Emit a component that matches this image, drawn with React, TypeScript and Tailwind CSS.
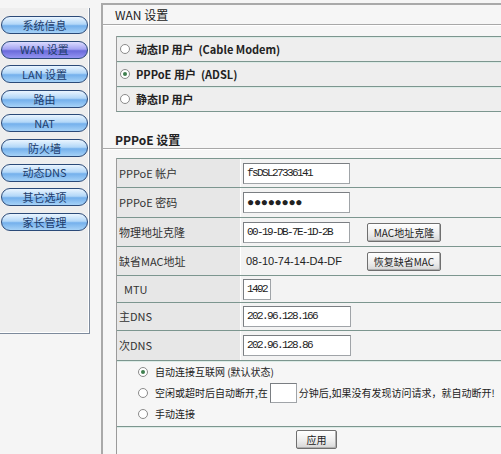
import React from "react";

const menu = ["系统信息", "WAN 设置", "LAN 设置", "路由", "NAT", "防火墙", "动态DNS", "其它选项", "家长管理"];

const cjk = "font-['Noto_Sans_CJK_SC','Liberation_Sans',sans-serif]";
const mono = "font-['Liberation_Mono','Noto_Sans_CJK_SC',monospace]";

function Radio({ on }: { on?: boolean }) {
  return (
    <span className="w-[10px] h-[10px] rounded-full border border-[#8a8a8a] bg-white flex items-center justify-center shrink-0">
      {on && <span className="w-[4px] h-[4px] rounded-full bg-[#3f7f4f]" />}
    </span>
  );
}

function TextBox({ value, w, mask }: { value: string; w: string; mask?: boolean }) {
  return (
    <div
      className={`${w} h-[21px] bg-white border border-[#a0a4a8] border-t-[#7a7e82] border-l-[#7a7e82] flex items-center px-[3px] ${mono} text-[11px] tracking-[-1.6px] text-[#222]`}
    >
      {mask ? <span className="text-[12px] tracking-[-0.3px] font-bold">●●●●●●●●</span> : value}
    </div>
  );
}

function Btn({ label, w }: { label: string; w: string }) {
  return (
    <div
      className={`${w} h-[19px] rounded-[2px] border border-[#6f6f6f] bg-[linear-gradient(to_bottom,#ffffff,#ececec_60%,#d6d6d6)] flex items-center justify-center ${cjk} text-[10px] text-[#222] shadow-[inset_-1px_-1px_0_#b0b0b0]`}
    >
      {label}
    </div>
  );
}

const rowLine = "border-t border-[#7c968f] shadow-[inset_0_1px_0_#dcebe6]";

export default function App() {
  const rows: { label: string; h: string; cell: React.ReactNode; indent?: boolean }[] = [
    { label: "PPPoE 帐户", h: "h-[29px]", cell: <TextBox value="fsDSL27336141" w="w-[107px]" /> },
    { label: "PPPoE 密码", h: "h-[30px]", cell: <TextBox value="" mask w="w-[107px]" /> },
    {
      label: "物理地址克隆",
      h: "h-[29px]",
      cell: (
        <div className="flex items-center gap-[17px]">
          <TextBox value="00-19-DB-7E-1D-2B" w="w-[107px]" />
          <Btn label="MAC地址克隆" w="w-[74px]" />
        </div>
      ),
    },
    {
      label: "缺省MAC地址",
      h: "h-[29px]",
      cell: (
        <div className="flex items-center">
          <span className="w-[124px] pl-[3px] font-['Liberation_Sans',sans-serif] text-[11px] text-[#222]">08-10-74-14-D4-DF</span>
          <Btn label="恢复缺省MAC" w="w-[74px]" />
        </div>
      ),
    },
    { label: "MTU", h: "h-[27px]", indent: true, cell: <TextBox value="1492" w="w-[28px]" /> },
    { label: "主DNS", h: "h-[28px]", cell: <TextBox value="202.96.128.166" w="w-[108px]" /> },
    { label: "次DNS", h: "h-[30px]", cell: <TextBox value="202.96.128.86" w="w-[108px]" /> },
  ];

  return (
    <div className="w-[501px] h-[454px] overflow-hidden bg-[#f5f5f5] flex">
      {/* sidebar */}
      <div className="w-[90px] pt-[8px] shrink-0">
        <div className="h-[326px] bg-[#eeeeee] border-r border-b border-[#7d8a9c] shadow-[inset_-1px_-1px_0_#ffffff] pt-[8px] flex flex-col gap-[6.6px]">
          {menu.map((m, i) => (
            <div
              key={m}
              className={`ml-[1px] w-[87px] h-[18px] rounded-[9px] border border-[#2b4a78] flex items-center justify-center ${cjk} text-[11px] text-[#1d3c6c] ${
                i === 1
                  ? "bg-[linear-gradient(to_bottom,#dcdcff_0%,#a4a4f2_45%,#6a6ada_55%,#9494f2_100%)]"
                  : "bg-[linear-gradient(to_bottom,#eaf5ff_0%,#b2d7f8_45%,#74b0ec_55%,#a6d2f7_100%)]"
              }`}
            >
              {m}
            </div>
          ))}
        </div>
      </div>

      {/* main */}
      <div className="ml-[11px] mt-[3px] flex-1 border-l-2 border-t-2 border-[#a9a9a9] bg-[#f6f6f6] flex flex-col">
        <div className={`h-[20px] pl-[12px] flex items-center ${cjk} text-[12px] text-[#222] border-b border-[#a8a8a8] shadow-[0_1px_0_#ffffff]`}>
          WAN 设置
        </div>

        <div className="ml-[13px] mt-[11px] border-l border-[#9a9a9a] border-b border-b-[#7c968f] bg-[#eeeeee]">
          {[
            { t: "动态IP 用户  (Cable Modem)", on: false },
            { t: "PPPoE 用户  (ADSL)", on: true },
            { t: "静态IP 用户", on: false },
          ].map((r) => (
            <div key={r.t} className={`h-[25px] ${rowLine} flex items-center pl-[3px] gap-[6px]`}>
              <Radio on={r.on} />
              <span className={`${cjk} text-[11px] font-bold text-[#222] whitespace-pre`}>{r.t}</span>
            </div>
          ))}
        </div>

        <div className={`mt-[20px] h-[17px] pl-[12px] flex items-center ${cjk} text-[12px] font-bold text-[#222] border-b border-[#a8a8a8] shadow-[0_1px_0_#ffffff]`}>
          PPPoE 设置
        </div>

        <div className="ml-[13px] mt-[9px] flex-1 border-l border-[#9a9a9a] flex flex-col">
          {rows.map((r) => (
            <div key={r.label} className={`${r.h} ${rowLine} flex`}>
              <div
                className={`w-[124px] bg-[#e7e7e7] border-r border-[#ffffff] flex items-center ${
                  r.indent ? "pl-[7px]" : "pl-[2px]"
                } ${cjk} text-[11px] text-[#333]`}
              >
                {r.label}
              </div>
              <div className="flex-1 bg-[#f3f3f3] flex items-center pl-[2px]">{r.cell}</div>
            </div>
          ))}

          <div className={`${rowLine} pl-[21px] flex flex-col ${cjk} text-[10px] text-[#222]`}>
            <div className="h-[21px] flex items-center gap-[7px]">
              <Radio on />
              <span>自动连接互联网 (默认状态)</span>
            </div>
            <div className="h-[21px] flex items-center gap-[7px] whitespace-nowrap">
              <Radio />
              <span className="flex items-center">
                空闲或超时后自动断开,在
                <span className="mx-[2px] w-[27px] h-[20px] bg-white border border-[#a0a4a8] border-t-[#7a7e82] border-l-[#7a7e82] inline-block" />
                分钟后,如果没有发现访问请求，就自动断开!
              </span>
            </div>
            <div className="h-[21px] flex items-center gap-[7px]">
              <Radio />
              <span>手动连接</span>
            </div>
          </div>

          <div className={`mt-[2px] ${rowLine} pt-[3px] flex pl-[179px]`}>
            <Btn label="应用" w="w-[41px]" />
          </div>
        </div>
      </div>
    </div>
  );
}
